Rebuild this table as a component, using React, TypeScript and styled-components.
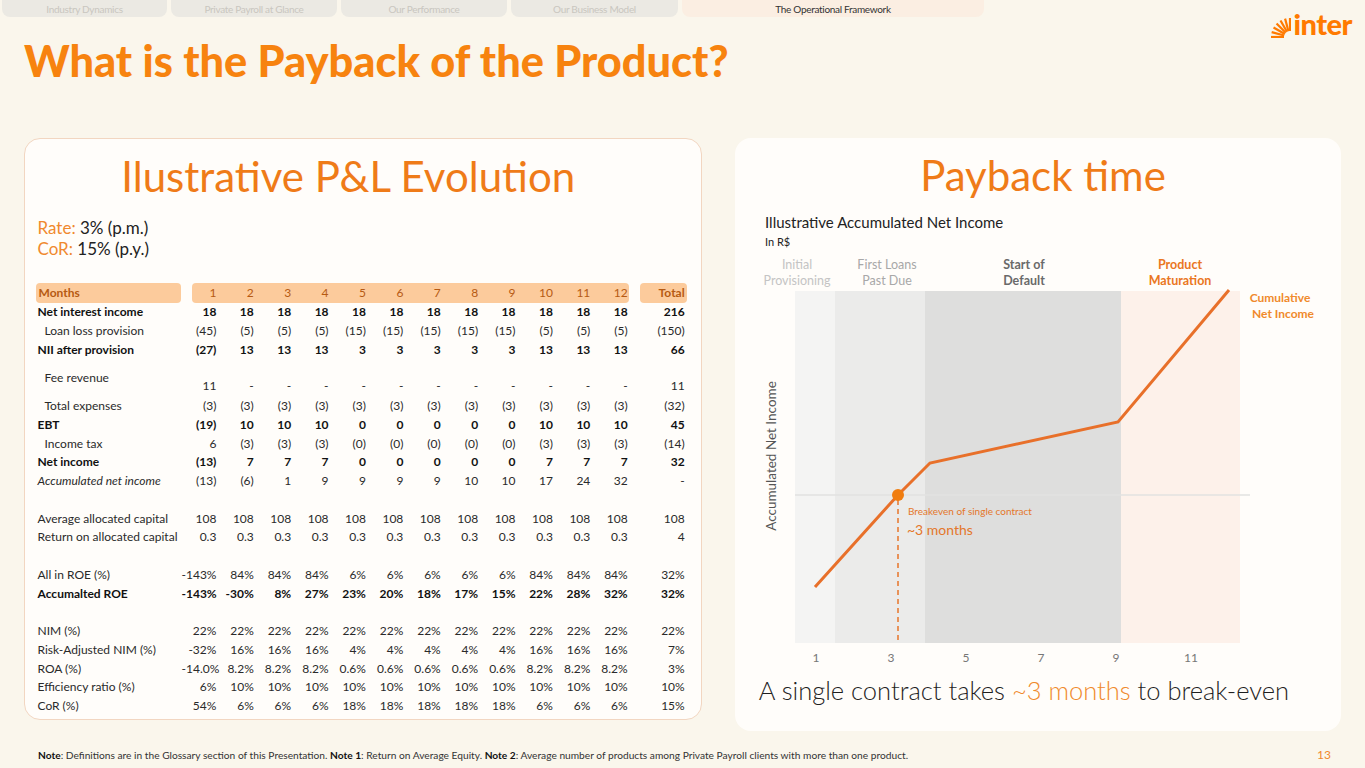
import React from "react";
import styled, { createGlobalStyle } from "styled-components";

const GlobalStyle = createGlobalStyle`
  html, body {
    margin: 0;
    padding: 0;
    background: #faf6ec;
  }
  body {
    font-family: Lato, "Open Sans", sans-serif;
    color: #222;
  }
`;

const Page = styled.div`
  width: 1365px;
  height: 768px;
  overflow: hidden;
  display: flex;
  flex-direction: column;
  background: #faf6ec;
`;

const Header = styled.header`
  display: grid;
  grid-template-columns: 1fr auto;
  grid-template-rows: 17px auto;
`;

const Tabs = styled.nav`
  grid-column: 1;
  grid-row: 1;
  display: flex;
  gap: 4px;
  padding-left: 2px;
`;

const Tab = styled.div<{ $active?: boolean; $w: number }>`
  width: ${(p) => p.$w}px;
  height: 17px;
  display: flex;
  align-items: center;
  justify-content: center;
  border-radius: 0 0 8px 8px;
  background: ${(p) => (p.$active ? "#fbeee2" : "#ebe9e3")};
  color: ${(p) => (p.$active ? "#333" : "#c9c6bf")};
  font-size: 10px;
  letter-spacing: -0.3px;
`;

const Title = styled.h1`
  grid-column: 1;
  grid-row: 2;
  margin: 18px 0 0 24px;
  font-size: 43.3px;
  line-height: 50px;
  font-weight: 900;
  color: #f7830f;
`;

const Logo = styled.div`
  grid-column: 2;
  grid-row: 1 / span 2;
  align-self: start;
  margin: 9px 13px 0 0;
  display: flex;
  align-items: flex-end;
  gap: 2px;
`;

const LogoWord = styled.span`
  font-size: 29px;
  line-height: 29px;
  font-weight: 900;
  letter-spacing: -0.5px;
  color: #ff7a00;
`;

const Panels = styled.main`
  display: flex;
  align-items: flex-start;
  gap: 33px;
  margin: 53px 0 0 24px;
`;

const LeftPanel = styled.section`
  box-sizing: border-box;
  width: 678px;
  height: 582px;
  padding: 13px 12px 0 10.5px;
  background: #fffdfa;
  border: 1.5px solid #f2d6c1;
  border-radius: 16px;
`;

const RightPanel = styled.section`
  box-sizing: border-box;
  width: 606px;
  height: 593px;
  padding-top: 13px;
  background: #fffdfa;
  border-radius: 16px;
`;

const PanelTitle = styled.h2<{ $offset: number }>`
  margin: 0;
  padding-left: ${(p) => Math.max(p.$offset, 0) * 2}px;
  padding-right: ${(p) => Math.max(-p.$offset, 0) * 2}px;
  text-align: center;
  font-size: 42px;
  line-height: 48px;
  font-weight: 400;
  color: #ef7b18;
`;

const Rates = styled.div`
  margin-top: 17px;
  padding-left: 2px;
  font-size: 17px;
  line-height: 21px;
  color: #222;
`;

const RateKey = styled.span`
  color: #f0892e;
`;

const Table = styled.div`
  margin-top: 24px;
  font-size: 12px;
`;

const COLS = "146px repeat(12, 37.4px) 58px";

const HeadRow = styled.div`
  display: grid;
  grid-template-columns: ${COLS};
  height: 19.5px;
  align-items: center;
  color: #b65a12;
`;

const HeadBg = styled.div<{ $from: number; $to: number; $inset: number }>`
  grid-row: 1;
  grid-column: ${(p) => p.$from} / ${(p) => p.$to};
  align-self: stretch;
  margin: 0 1px 0 ${(p) => p.$inset}px;
  background: #fccb9c;
  border-radius: 4px;
`;

const HeadLabel = styled.div`
  grid-row: 1;
  grid-column: 1;
  padding-left: 3px;
  font-weight: 700;
`;

const HeadCell = styled.div<{ $col: number; $bold?: boolean }>`
  grid-row: 1;
  grid-column: ${(p) => p.$col};
  text-align: right;
  padding-right: ${(p) => (p.$col === 14 ? 3.5 : 2.5)}px;
  font-weight: ${(p) => (p.$bold ? 700 : 400)};
`;

const Row = styled.div<{ $tall?: boolean }>`
  display: grid;
  grid-template-columns: ${COLS};
  height: ${(p) => (p.$tall ? 37.5 : 18.75)}px;
  align-items: center;
`;

const Label = styled.div<{ $bold?: boolean; $italic?: boolean; $indent?: boolean }>`
  padding-left: ${(p) => (p.$indent ? 9 : 2)}px;
  font-weight: ${(p) => (p.$bold ? 700 : 400)};
  font-style: ${(p) => (p.$italic ? "italic" : "normal")};
  color: ${(p) => (p.$bold ? "#111" : "#2a2a2a")};
  white-space: nowrap;
`;

const Cell = styled.div<{ $bold?: boolean; $low?: boolean; $total?: boolean }>`
  text-align: right;
  padding-right: ${(p) => (p.$total ? 3.5 : 2.5)}px;
  white-space: nowrap;
  font-weight: ${(p) => (p.$bold ? 700 : 400)};
  color: ${(p) => (p.$bold ? "#111" : "#2a2a2a")};
  align-self: ${(p) => (p.$low ? "end" : "center")};
  padding-bottom: ${(p) => (p.$low ? 3 : 0)}px;
`;

const Spacer = styled.div`
  height: 18.75px;
`;

const Subtitle = styled.div`
  margin-top: 14px;
  padding-left: 30px;
  font-size: 15px;
  line-height: 18px;
  color: #222;
`;

const Unit = styled.div`
  margin-top: 4px;
  padding-left: 30px;
  font-size: 11px;
  line-height: 14px;
  color: #222;
`;

const ChartSvg = styled.svg`
  display: block;
  margin: 3px 0 0 10px;
  font-family: Lato, sans-serif;
`;

const Sentence = styled.p`
  margin: 9px 28px 0 0;
  text-align: center;
  font-size: 25.5px;
  line-height: 28px;
  font-weight: 300;
  color: #1f1f1f;
`;

const Accent = styled.span`
  color: #f08a2c;
`;

const Footer = styled.footer`
  margin-top: auto;
  display: flex;
  justify-content: space-between;
  padding: 0 34px 6px 38px;
  font-size: 10.2px;
  line-height: 14px;
  color: #333;
`;

const NoteKey = styled.b`
  color: #111;
`;

const PageNum = styled.span`
  font-size: 12px;
  color: #f0892e;
`;

type RowData = {
  label: string;
  vals: string[];
  total: string;
  bold?: boolean;
  italic?: boolean;
  indent?: boolean;
  tall?: boolean;
};

const rep = (v: string, n: number) => Array(n).fill(v) as string[];

const rows: (RowData | null)[] = [
  { label: "Net interest income", bold: true, vals: rep("18", 12), total: "216" },
  {
    label: "Loan loss provision",
    indent: true,
    vals: ["(45)", ...rep("(5)", 3), ...rep("(15)", 5), ...rep("(5)", 3)],
    total: "(150)",
  },
  {
    label: "NII after provision",
    bold: true,
    vals: ["(27)", ...rep("13", 3), ...rep("3", 5), ...rep("13", 3)],
    total: "66",
  },
  { label: "Fee revenue", indent: true, tall: true, vals: ["11", ...rep("-", 11)], total: "11" },
  { label: "Total expenses", indent: true, vals: rep("(3)", 12), total: "(32)" },
  {
    label: "EBT",
    bold: true,
    vals: ["(19)", ...rep("10", 3), ...rep("0", 5), ...rep("10", 3)],
    total: "45",
  },
  {
    label: "Income tax",
    indent: true,
    vals: ["6", ...rep("(3)", 3), ...rep("(0)", 5), ...rep("(3)", 3)],
    total: "(14)",
  },
  {
    label: "Net income",
    bold: true,
    vals: ["(13)", ...rep("7", 3), ...rep("0", 5), ...rep("7", 3)],
    total: "32",
  },
  {
    label: "Accumulated net income",
    italic: true,
    vals: ["(13)", "(6)", "1", "9", "9", "9", "9", "10", "10", "17", "24", "32"],
    total: "-",
  },
  null,
  { label: "Average allocated capital", vals: rep("108", 12), total: "108" },
  { label: "Return on allocated capital", vals: rep("0.3", 12), total: "4" },
  null,
  {
    label: "All in ROE (%)",
    vals: ["-143%", ...rep("84%", 3), ...rep("6%", 5), ...rep("84%", 3)],
    total: "32%",
  },
  {
    label: "Accumalted ROE",
    bold: true,
    vals: ["-143%", "-30%", "8%", "27%", "23%", "20%", "18%", "17%", "15%", "22%", "28%", "32%"],
    total: "32%",
  },
  null,
  { label: "NIM (%)", vals: rep("22%", 12), total: "22%" },
  {
    label: "Risk-Adjusted NIM (%)",
    vals: ["-32%", ...rep("16%", 3), ...rep("4%", 5), ...rep("16%", 3)],
    total: "7%",
  },
  {
    label: "ROA (%)",
    vals: ["-14.0%", ...rep("8.2%", 3), ...rep("0.6%", 5), ...rep("8.2%", 3)],
    total: "3%",
  },
  { label: "Efficiency ratio (%)", vals: ["6%", ...rep("10%", 11)], total: "10%" },
  {
    label: "CoR (%)",
    vals: ["54%", ...rep("6%", 3), ...rep("18%", 5), ...rep("6%", 3)],
    total: "15%",
  },
];

const tabs = [
  { name: "Industry Dynamics", w: 165 },
  { name: "Private Payroll at Glance", w: 166 },
  { name: "Our Performance", w: 166 },
  { name: "Our Business Model", w: 167 },
  { name: "The Operational Framework", w: 302, active: true },
];

const phases = [
  { x: 797, lines: ["Initial", "Provisioning"], color: "#c4c4c4", weight: 400 },
  { x: 887, lines: ["First Loans", "Past Due"], color: "#a8a8a8", weight: 400 },
  { x: 1024, lines: ["Start of", "Default"], color: "#6a6a6a", weight: 700 },
  { x: 1180, lines: ["Product", "Maturation"], color: "#ea7622", weight: 700 },
];

const InterMark = () => {
  const cx = 20;
  const cy = 19;
  const rays = Array.from({ length: 7 }, (_, i) => {
    const a = Math.PI - (i * Math.PI) / 2 / 6;
    return {
      x1: cx + Math.cos(a) * 6,
      y1: cy - Math.sin(a) * 6,
      x2: cx + Math.cos(a) * 19,
      y2: cy - Math.sin(a) * 19,
    };
  });
  return (
    <svg width={21} height={20} viewBox="0 0 21 20">
      {rays.map((r, i) => (
        <line key={i} {...r} stroke="#ff7a00" strokeWidth={2.2} />
      ))}
    </svg>
  );
};

const Chart = () => (
  <ChartSvg width={585} height={415} viewBox="745 252 585 415">
    {phases.map((p) => (
      <text
        key={p.x}
        x={p.x}
        y={269}
        textAnchor="middle"
        fontSize={12.5}
        fill={p.color}
        fontWeight={p.weight}
      >
        <tspan x={p.x}>{p.lines[0]}</tspan>
        <tspan x={p.x} dy={16}>
          {p.lines[1]}
        </tspan>
      </text>
    ))}
    <rect x={795} y={291} width={40} height={352} fill="#f4f4f3" />
    <rect x={835} y={291} width={90} height={352} fill="#ebebea" />
    <rect x={925} y={291} width={196} height={352} fill="#dededd" />
    <rect x={1121} y={291} width={119} height={352} fill="#fdf1ea" />
    <line x1={795} y1={495} x2={1250} y2={495} stroke="#e2e2e0" strokeWidth={1.5} />
    <line
      x1={898}
      y1={500}
      x2={898}
      y2={643}
      stroke="#e8762a"
      strokeWidth={1.5}
      strokeDasharray="5 4"
    />
    <polyline
      points="815,587 898,495 930,463 1118,422 1229,290"
      fill="none"
      stroke="#e8702a"
      strokeWidth={3}
    />
    <circle cx={898} cy={495} r={6} fill="#f07d0f" />
    <text x={908} y={515} fontSize={10} fill="#e4772a">
      Breakeven of single contract
    </text>
    <text x={907} y={535} fontSize={14} fill="#e4772a">
      ~3 months
    </text>
    <text
      x={0}
      y={0}
      transform="translate(776 456) rotate(-90)"
      textAnchor="middle"
      fontSize={13.5}
      fill="#555"
    >
      Accumulated Net Income
    </text>
    <text x={1280} y={302} textAnchor="middle" fontSize={12} fontWeight={700} fill="#f08a2c">
      <tspan x={1280}>Cumulative</tspan>
      <tspan x={1283} dy={16}>
        Net Income
      </tspan>
    </text>
    {[1, 3, 5, 7, 9, 11].map((m) => (
      <text
        key={m}
        x={816 + (m - 1) * 37.5}
        y={662}
        textAnchor="middle"
        fontSize={12}
        fill="#777"
      >
        {m}
      </text>
    ))}
  </ChartSvg>
);

const PnlTable = () => (
  <Table>
    <HeadRow>
      <HeadBg $from={1} $to={2} $inset={0} />
      <HeadBg $from={2} $to={14} $inset={10} />
      <HeadBg $from={14} $to={15} $inset={10} />
      <HeadLabel>Months</HeadLabel>
      {Array.from({ length: 12 }, (_, i) => (
        <HeadCell key={i} $col={i + 2}>
          {i + 1}
        </HeadCell>
      ))}
      <HeadCell $col={14} $bold>
        Total
      </HeadCell>
    </HeadRow>
    {rows.map((r, i) =>
      r ? (
        <Row key={i} $tall={r.tall}>
          <Label $bold={r.bold} $italic={r.italic} $indent={r.indent}>
            {r.label}
          </Label>
          {r.vals.map((v, j) => (
            <Cell key={j} $bold={r.bold} $low={r.tall}>
              {v}
            </Cell>
          ))}
          <Cell $bold={r.bold} $total $low={r.tall}>
            {r.total}
          </Cell>
        </Row>
      ) : (
        <Spacer key={i} />
      )
    )}
  </Table>
);

export default function App() {
  return (
    <Page>
      <GlobalStyle />
      <Header>
        <Tabs>
          {tabs.map((t) => (
            <Tab key={t.name} $w={t.w} $active={t.active}>
              {t.name}
            </Tab>
          ))}
        </Tabs>
        <Title>What is the Payback of the Product?</Title>
        <Logo>
          <InterMark />
          <LogoWord>inter</LogoWord>
        </Logo>
      </Header>
      <Panels>
        <LeftPanel>
          <PanelTitle $offset={-14}>Ilustrative P&amp;L Evolution</PanelTitle>
          <Rates>
            <div>
              <RateKey>Rate:</RateKey> 3% (p.m.)
            </div>
            <div>
              <RateKey>CoR:</RateKey> 15% (p.y.)
            </div>
          </Rates>
          <PnlTable />
        </LeftPanel>
        <RightPanel>
          <PanelTitle $offset={5}>Payback time</PanelTitle>
          <Subtitle>Illustrative Accumulated Net Income</Subtitle>
          <Unit>In R$</Unit>
          <Chart />
          <Sentence>
            A single contract takes <Accent>~3 months</Accent> to break-even
          </Sentence>
        </RightPanel>
      </Panels>
      <Footer>
        <span>
          <NoteKey>Note</NoteKey>: Definitions are in the Glossary section of this Presentation.{" "}
          <NoteKey>Note 1</NoteKey>: Return on Average Equity. <NoteKey>Note 2</NoteKey>: Average
          number of products among Private Payroll clients with more than one product.
        </span>
        <PageNum>13</PageNum>
      </Footer>
    </Page>
  );
}
